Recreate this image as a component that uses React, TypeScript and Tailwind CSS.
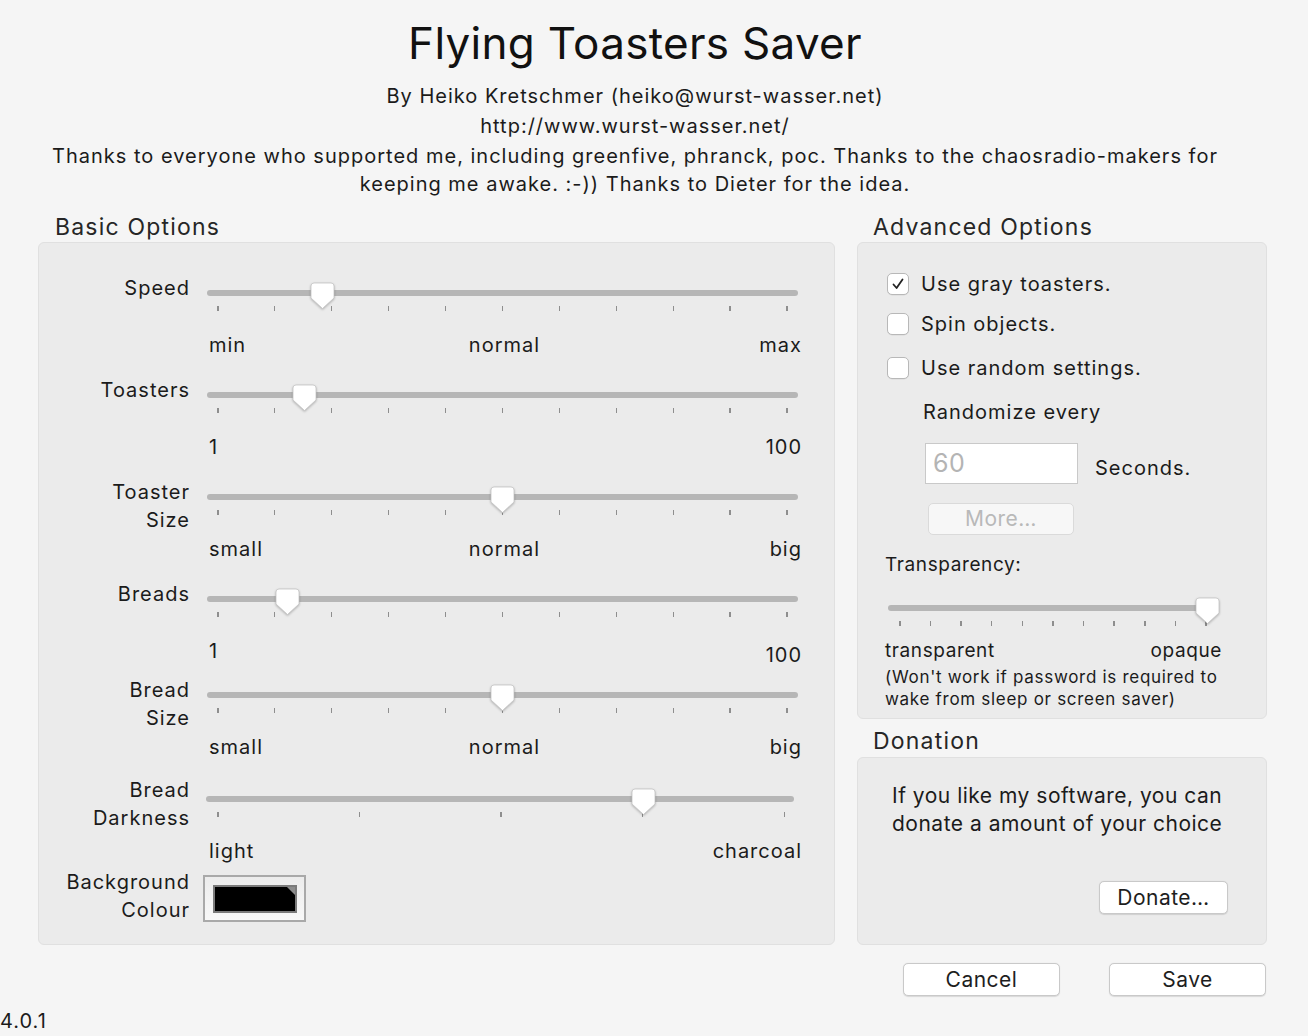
import React from "react";

type SliderProps = {
  value: number;
  ticks: number;
  trackClass: string;
  trackWidth: number;
  inset: number;
};

function Thumb() {
  return (
    <svg width="25" height="28" viewBox="0 0 25 28" className="drop-shadow-[0_1px_1px_rgba(0,0,0,0.25)]">
      <path
        d="M4 1 H21 A3 3 0 0 1 24 4 V16 L12.5 26.5 L1 16 V4 A3 3 0 0 1 4 1 Z"
        fill="#ffffff"
        stroke="#c4c4c4"
        strokeWidth="0.8"
      />
    </svg>
  );
}

// track + thumb + tick marks
function Slider({ value, ticks, trackClass, trackWidth, inset }: SliderProps) {
  const span = trackWidth - inset * 2;
  const left = inset + value * span - 12.5;
  return (
    <div className="relative pt-[16px]">
      <div className={`h-[6px] rounded-full bg-[#b6b6b6] ${trackClass}`} />
      <div className="mt-[10px] flex justify-between" style={{ width: trackWidth, paddingLeft: inset, paddingRight: inset }}>
        {Array.from({ length: ticks }).map((_, i) => (
          <div key={i} className="h-[5px] w-[1.5px] bg-[#8e8e8e]" />
        ))}
      </div>
      <div className="absolute top-[8px]" style={{ left }}>
        <Thumb />
      </div>
    </div>
  );
}

type RowProps = {
  label: string[];
  value: number;
  ticks?: number;
  labels: string[];
  trackClass?: string;
  trackWidth?: number;
  className?: string;
  sliderClass?: string;
  raiseLast?: boolean;
};

function SliderRow({
  label,
  value,
  ticks = 11,
  labels,
  trackClass = "w-[591px]",
  trackWidth = 591,
  className = "",
  sliderClass = "",
  raiseLast = false,
}: RowProps) {
  return (
    <div className={`grid grid-cols-[151px_595px] gap-x-[17px] ${className}`}>
      <div className="text-right leading-[28px]">
        {label.map((l) => (
          <div key={l}>{l}</div>
        ))}
      </div>
      <div className={sliderClass}>
        <Slider value={value} ticks={ticks} trackClass={trackClass} trackWidth={trackWidth} inset={10} />
        {labels.length === 3 ? (
          <div className="mt-[22px] grid grid-cols-3 leading-[24px]">
            <div className="pl-[2px]">{labels[0]}</div>
            <div className="text-center">{labels[1]}</div>
            <div className="text-right">{labels[2]}</div>
          </div>
        ) : (
          <div className="mt-[22px] flex h-[24px] items-start justify-between leading-[24px]">
            <div className="pl-[2px]">{labels[0]}</div>
            <div className={raiseLast ? "mt-[4px]" : ""}>{labels[1]}</div>
          </div>
        )}
      </div>
    </div>
  );
}

function Checkbox({ checked, label, className = "" }: { checked?: boolean; label: string; className?: string }) {
  return (
    <div className={`flex h-[28px] items-center gap-[12px] ${className}`}>
      <div className="flex h-[22px] w-[22px] items-center justify-center rounded-[5px] border border-[#b8b8b8] bg-white shadow-[0_0.5px_0.5px_rgba(0,0,0,0.08)]">
        {checked && (
          <svg width="16" height="16" viewBox="0 0 16 16">
            <path d="M3.5 8.5 L6.6 12 L12.5 3.5" fill="none" stroke="#222" strokeWidth="1.8" strokeLinecap="round" strokeLinejoin="round" />
          </svg>
        )}
      </div>
      <span>{label}</span>
    </div>
  );
}

function MacButton({ children, className = "" }: { children: React.ReactNode; className?: string }) {
  return (
    <button
      className={`flex h-[33px] items-center justify-center rounded-[5px] border border-[#c9c9c9] bg-white text-[21px] tracking-[0.5px] text-[#1e1e1e] shadow-[0_0.5px_1px_rgba(0,0,0,0.12)] ${className}`}
    >
      {children}
    </button>
  );
}

export default function App() {
  return (
    <div className="h-[1036px] w-[1308px] overflow-hidden bg-[#f5f5f5] font-['Inter','Liberation_Sans',sans-serif] text-[20px] tracking-[1px] text-[#1b1b1b]">
      {/* HEADER */}
      <div className="w-[1270px] text-center">
        <h1 className="pt-[17px] text-[44px] leading-[52px] tracking-[0.3px] text-[#111]">Flying Toasters Saver</h1>
        <div className="mt-[12px] leading-[30px]">By Heiko Kretschmer (heiko@wurst-wasser.net)</div>
        <div className="leading-[30px]">http://www.wurst-wasser.net/</div>
        <p className="mt-[1px] leading-[28px]">
          Thanks to everyone who supported me, including greenfive, phranck, poc. Thanks to the chaosradio-makers for
          <br />
          keeping me awake. :-)) Thanks to Dieter for the idea.
        </p>
      </div>

      <div className="mt-[15px] flex gap-[22px] pl-[38px]">
        {/* BASIC OPTIONS */}
        <div className="w-[797px]">
          <div className="pl-[17px] text-[23px] leading-[28px] tracking-[1.2px] text-[#262626]">Basic Options</div>
          <div className="mt-[1px] h-[703px] rounded-[6px] border border-[#e0e0e0] bg-[#ebebeb] pt-[31px]">
            <SliderRow label={["Speed"]} value={0.184} labels={["min", "normal", "max"]} />
            <SliderRow className="mt-[19px]" label={["Toasters"]} value={0.153} labels={["1", "100"]} />
            <SliderRow className="mt-[19px]" label={["Toaster", "Size"]} value={0.5} labels={["small", "normal", "big"]} />
            <SliderRow className="mt-[19px]" label={["Breads"]} value={0.123} labels={["1", "100"]} raiseLast />
            <SliderRow className="mt-[13px]" label={["Bread", "Size"]} value={0.5} labels={["small", "normal", "big"]} />
            <SliderRow
              className="mt-[17px]"
              sliderClass="pt-[4px]"
              label={["Bread", "Darkness"]}
              value={0.75}
              ticks={5}
              trackClass="-ml-[1px] w-[588px]"
              trackWidth={588}
              labels={["light", "charcoal"]}
            />

            {/* BACKGROUND COLOUR */}
            <div className="mt-[5px] grid grid-cols-[151px_595px] gap-x-[17px]">
              <div className="text-right leading-[28px]">
                <div>Background</div>
                <div>Colour</div>
              </div>
              <div>
                <div className="-ml-[4px] mt-[7px] flex h-[47px] w-[103px] items-center justify-center border-[2px] border-[#a9a9a9] bg-gradient-to-b from-[#ececec] to-[#f8f8f8]">
                  <div className="relative h-[28px] w-[84px] border-[2px] border-[#7b7b7b] bg-black">
                    <div className="absolute right-0 top-0 h-0 w-0 border-l-[8px] border-t-[8px] border-l-transparent border-t-[#8c8c8c]" />
                  </div>
                </div>
              </div>
            </div>
          </div>
        </div>

        {/* RIGHT COLUMN */}
        <div className="w-[410px]">
          <div className="pl-[16px] text-[23px] leading-[28px] tracking-[1.2px] text-[#262626]">Advanced Options</div>
          <div className="mt-[1px] h-[477px] rounded-[6px] border border-[#e0e0e0] bg-[#ebebeb] pt-[27px]">
            <Checkbox className="pl-[29px]" checked label="Use gray toasters." />
            <Checkbox className="mt-[12px] pl-[29px]" label="Spin objects." />
            <Checkbox className="mt-[16px] pl-[29px]" label="Use random settings." />
            <div className="mt-[16px] pl-[65px] leading-[28px]">Randomize every</div>
            <div className="mt-[17px] flex items-start pl-[67px]">
              <div className="flex h-[41px] w-[153px] items-center border border-[#c9c9c9] bg-white pl-[7px] text-[25px] tracking-[0.5px] text-[#b4b4b4]">
                60
              </div>
              <div className="ml-[17px] mt-[11px] leading-[28px]">Seconds.</div>
            </div>
            <div className="mt-[19px] pl-[70px]">
              <div className="flex h-[32px] w-[146px] items-center justify-center rounded-[5px] border border-[#dadada] bg-[#f7f7f7] text-[21px] tracking-[0.5px] text-[#b9b9b9]">
                More…
              </div>
            </div>
            <div className="mt-[18px] pl-[27px] text-[19px] leading-[24px] tracking-[0.6px]">Transparency:</div>
            <div className="mt-[12px] pl-[30px]">
              <Slider value={1} ticks={11} trackClass="w-[330px]" trackWidth={330} inset={11} />
            </div>
            <div className="mt-[13px] flex w-[364px] justify-between pl-[27px] text-[19px] leading-[24px] tracking-[0.6px]">
              <span>transparent</span>
              <span>opaque</span>
            </div>
            <div className="mt-[3px] pl-[27px] text-[17px] leading-[22px] tracking-[0.7px]">
              (Won't work if password is required to
              <br />
              wake from sleep or screen saver)
            </div>
          </div>

          <div className="mt-[8px] pl-[16px] text-[23px] leading-[28px] tracking-[1.2px] text-[#262626]">Donation</div>
          <div className="mt-[2px] h-[188px] rounded-[6px] border border-[#e0e0e0] bg-[#ebebeb] pt-[24px]">
            <div className="pl-[34px] text-[21px] leading-[28px] tracking-[0.5px]">
              If you like my software, you can
              <br />
              donate a amount of your choice
            </div>
            <div className="mt-[43px] flex justify-end pr-[38px]">
              <MacButton className="w-[129px]">Donate…</MacButton>
            </div>
          </div>

          <div className="mt-[18px] flex justify-end gap-[49px] pr-[1px]">
            <MacButton className="w-[157px]">Cancel</MacButton>
            <MacButton className="w-[157px]">Save</MacButton>
          </div>
        </div>
      </div>

      <div className="mt-[13px] leading-[24px]">4.0.1</div>
    </div>
  );
}
